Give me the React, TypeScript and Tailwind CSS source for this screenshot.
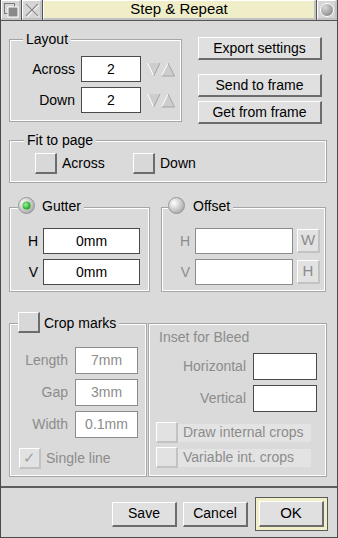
import React from 'react';

const bevel =
  'border-t border-l border-t-white border-l-white border-b-2 border-r-2 border-b-[#6c6c6c] border-r-[#6c6c6c]';
const bevelOff =
  'border-t border-l border-t-white border-l-white border-b-2 border-r-2 border-b-[#c2c2c2] border-r-[#c2c2c2]';

const Btn: React.FC<{ label: string; className?: string }> = ({ label, className = '' }) => (
  <div className={`flex items-center justify-center bg-[#e0e0e0] text-[14px] text-black ${bevel} ${className}`}>
    {label}
  </div>
);

const Check: React.FC<{ off?: boolean; ticked?: boolean; className?: string }> = ({ off, ticked, className = '' }) => (
  <div
    className={`flex h-[21px] w-[22px] shrink-0 items-center justify-center text-[15px] ${
      off ? `bg-[#e2e2e2] text-[#a0a0a0] ${bevelOff}` : `bg-[#d8d8d8] ${bevel}`
    } ${className}`}
  >
    {ticked ? '✓' : ''}
  </div>
);

const Field: React.FC<{ value?: string; off?: boolean; className?: string }> = ({ value = '', off, className = '' }) => (
  <div
    className={`flex items-center justify-center bg-white text-[14px] ${
      off ? 'border border-[#8c8c8c] text-[#8c8c8c]' : 'border border-[#4a4a4a] text-black'
    } ${className}`}
  >
    {value}
  </div>
);

const Group: React.FC<{ className?: string; legend?: React.ReactNode; legendClass?: string; children?: React.ReactNode }> = ({
  className = '',
  legend,
  legendClass = '',
  children,
}) => (
  <div className={`relative shrink-0 border border-[#a6a6a6] shadow-[inset_0_0_0_1px_#ffffff] ${className}`}>
    {legend && (
      <div className={`absolute flex items-center bg-[#dadada] pr-[3px] text-[14px] leading-[16px] ${legendClass}`}>
        {legend}
      </div>
    )}
    {children}
  </div>
);

const Arrows: React.FC = () => (
  <svg width="28" height="15" viewBox="0 0 28 15" className="ml-[6px]">
    <polygon points="0.5,1 13,1 6.75,14" fill="#cdcdcd" />
    <polyline points="0.5,1 6.75,14" stroke="#ffffff" strokeWidth="1" fill="none" />
    <polyline points="13,1 6.75,14" stroke="#a4a4a4" strokeWidth="1" fill="none" />
    <polygon points="21,1 27.5,14 14.5,14" fill="#cdcdcd" />
    <polyline points="21,1 14.5,14" stroke="#ffffff" strokeWidth="1" fill="none" />
    <polyline points="21,1 27.5,14 14.5,14" stroke="#a4a4a4" strokeWidth="1" fill="none" />
  </svg>
);

const Radio: React.FC<{ on?: boolean }> = ({ on }) => (
  <svg width="17" height="17" viewBox="0 0 17 17" className="shrink-0">
    <defs>
      <radialGradient id={on ? 'rg-on' : 'rg-off'} cx="0.35" cy="0.35" r="0.7">
        <stop offset="0" stopColor="#ffffff" />
        <stop offset="1" stopColor="#a8a8a8" />
      </radialGradient>
      <radialGradient id="green" cx="0.4" cy="0.4" r="0.6">
        <stop offset="0" stopColor="#9cf59c" />
        <stop offset="1" stopColor="#1fa51f" />
      </radialGradient>
    </defs>
    <circle cx="8.5" cy="8.5" r="8" fill={on ? 'url(#rg-on)' : 'url(#rg-off)'} stroke="#8a8a8a" strokeWidth="0.8" />
    {on && <circle cx="8.5" cy="8.5" r="4" fill="url(#green)" />}
  </svg>
);

export default function App() {
  return (
    <div className="flex h-[538px] w-[338px] flex-col overflow-hidden border-x border-b border-[#4a4a4a] bg-[#dadada] font-['Liberation_Sans',Arial,sans-serif] text-black">
      {/* title bar */}
      <div className="flex h-[21px] shrink-0 gap-px border-b border-[#555555] bg-[#555555]">
        <div className={`flex w-[20px] items-center justify-center bg-[#d6d6d6] ${bevelOff}`}>
          <svg width="16" height="16" viewBox="0 0 16 16">
            <rect x="1.5" y="1.5" width="10" height="10" fill="none" stroke="#7a7a7a" />
            <rect x="5" y="5" width="10" height="10" fill="#8a8a8a" stroke="#ffffff" strokeWidth="1" />
          </svg>
        </div>
        <div className={`flex w-[20px] items-center justify-center bg-[#d6d6d6] ${bevelOff}`}>
          <svg width="16" height="16" viewBox="0 0 16 16">
            <path d="M2 2 L14 14 M14 2 L2 14" stroke="#ffffff" strokeWidth="2" transform="translate(0.6,0.6)" />
            <path d="M2 2 L14 14 M14 2 L2 14" stroke="#8c8c8c" strokeWidth="1.4" />
          </svg>
        </div>
        <div className={`flex flex-1 items-center justify-center bg-[#efeec8] text-[15px] ${bevelOff}`}>Step &amp; Repeat</div>
        <div className={`flex w-[20px] items-center justify-center bg-[#d6d6d6] ${bevelOff}`}>
          <svg width="16" height="16" viewBox="0 0 16 16">
            <defs>
              <radialGradient id="tg" cx="0.35" cy="0.3" r="0.75">
                <stop offset="0" stopColor="#d8d8d8" />
                <stop offset="1" stopColor="#8a8a8a" />
              </radialGradient>
            </defs>
            <circle cx="8" cy="8" r="6.5" fill="url(#tg)" stroke="#ffffff" strokeWidth="1" />
          </svg>
        </div>
      </div>

      {/* layout + buttons */}
      <div className="flex pl-[8px] pt-[16px]">
        <Group className="mt-[2px] h-[83px] w-[173px]" legend="Layout" legendClass="-top-[9px] left-[13px] pl-[3px]">
          <div className="pt-[16px]">
            {['Across', 'Down'].map((l, i) => (
              <div key={l} className={`flex h-[26px] items-center ${i ? 'mt-[5px]' : ''}`}>
                <div className="w-[65px] text-right text-[14px]">{l}</div>
                <Field value="2" className="ml-[6px] h-[26px] w-[60px]" />
                <Arrows />
              </div>
            ))}
          </div>
        </Group>
        <div className="ml-[16px] flex w-[124px] flex-col">
          <Btn label="Export settings" className="h-[23px]" />
          <Btn label="Send to frame" className="mt-[14px] h-[23px]" />
          <Btn label="Get from frame" className="mt-[4px] h-[23px]" />
        </div>
      </div>

      {/* fit to page */}
      <Group className="ml-[8px] mt-[16px] h-[43px] w-[318px]" legend="Fit to page" legendClass="-top-[9px] left-[14px] pl-[3px]">
        <div className="flex items-center pl-[25px] pt-[12px] text-[14px]">
          <div className="flex w-[98px] items-center">
            <Check />
            <span className="ml-[5px]">Across</span>
          </div>
          <div className="flex items-center">
            <Check />
            <span className="ml-[5px]">Down</span>
          </div>
        </div>
      </Group>

      {/* gutter / offset */}
      <div className="ml-[8px] mt-[24px] flex">
        <Group
          className="h-[85px] w-[141px]"
          legend={
            <>
              <Radio on />
              <span className="ml-[7px]">Gutter</span>
            </>
          }
          legendClass="-top-[11px] left-[8px] h-[17px]"
        >
          <div className="pt-[20px] text-[14px]">
            {['H', 'V'].map((l, i) => (
              <div key={l} className={`flex items-center ${i ? 'mt-[5px]' : ''}`}>
                <div className="w-[28px] text-right">{l}</div>
                <Field value="0mm" className="ml-[5px] h-[26px] w-[97px]" />
              </div>
            ))}
          </div>
        </Group>
        <Group
          className="ml-[11px] h-[85px] w-[165px]"
          legend={
            <>
              <Radio />
              <span className="ml-[8px]">Offset</span>
            </>
          }
          legendClass="-top-[11px] left-[6px] h-[17px]"
        >
          <div className="pt-[20px] text-[14px] text-[#8c8c8c]">
            {[
              ['H', 'W'],
              ['V', 'H'],
            ].map(([l, b], i) => (
              <div key={l} className={`flex items-center ${i ? 'mt-[5px]' : ''}`}>
                <div className="w-[28px] text-right">{l}</div>
                <Field off className="ml-[5px] h-[26px] w-[98px]" />
                <div className={`ml-[4px] flex h-[24px] w-[23px] items-center justify-center bg-[#e2e2e2] text-[15px] ${bevelOff}`}>
                  {b}
                </div>
              </div>
            ))}
          </div>
        </Group>
      </div>

      {/* crop marks / inset */}
      <div className="ml-[8px] mt-[31px] flex">
        <Group
          className="h-[154px] w-[138px]"
          legend={
            <>
              <Check />
              <span className="ml-[4px]">Crop marks</span>
            </>
          }
          legendClass="-top-[12px] left-[8px] h-[21px]"
        >
          <div className="pt-[23px] text-[14px] text-[#8c8c8c]">
            {[
              ['Length', '7mm'],
              ['Gap', '3mm'],
              ['Width', '0.1mm'],
            ].map(([l, v], i) => (
              <div key={l} className={`flex items-center ${i ? 'mt-[5px]' : ''}`}>
                <div className="w-[58px] text-right">{l}</div>
                <Field off value={v} className="ml-[7px] h-[27px] w-[63px]" />
              </div>
            ))}
            <div className="mt-[10px] flex items-center pl-[9px]">
              <Check off ticked />
              <span className="ml-[5px]">Single line</span>
            </div>
          </div>
        </Group>
        <Group className="ml-[1px] h-[154px] w-[179px]">
          <div className="text-[14px] text-[#8c8c8c]">
            <div className="pl-[10px] pt-[5px] leading-[16px]">Inset for Bleed</div>
            {['Horizontal', 'Vertical'].map((l, i) => (
              <div key={l} className={`flex items-center ${i ? 'mt-[5px]' : 'mt-[8px]'}`}>
                <div className="w-[97px] text-right">{l}</div>
                <Field className="ml-[7px] h-[27px] w-[64px]" />
              </div>
            ))}
            {['Draw internal crops', 'Variable int. crops'].map((l, i) => (
              <div key={l} className={`flex items-center pl-[7px] ${i ? 'mt-[4px]' : 'mt-[10px]'}`}>
                <Check off />
                <span className="flex h-[18px] w-[133px] items-center bg-[#e3e3e3] pl-[5px]">{l}</span>
              </div>
            ))}
          </div>
        </Group>
      </div>

      {/* separator */}
      <div className="mt-[9px] h-[2px] shrink-0 bg-[#5e5e5e]" />

      {/* action buttons */}
      <div className="mt-[9px] flex items-center pl-[111px]">
        <Btn label="Save" className="h-[25px] w-[65px]" />
        <Btn label="Cancel" className="ml-[6px] h-[25px] w-[65px]" />
        <div className="ml-[7px] border border-[#5a5a5a] bg-[#f0efc8] p-[3px]">
          <Btn label="OK" className="h-[26px] w-[65px] text-[15px]" />
        </div>
      </div>
    </div>
  );
}
